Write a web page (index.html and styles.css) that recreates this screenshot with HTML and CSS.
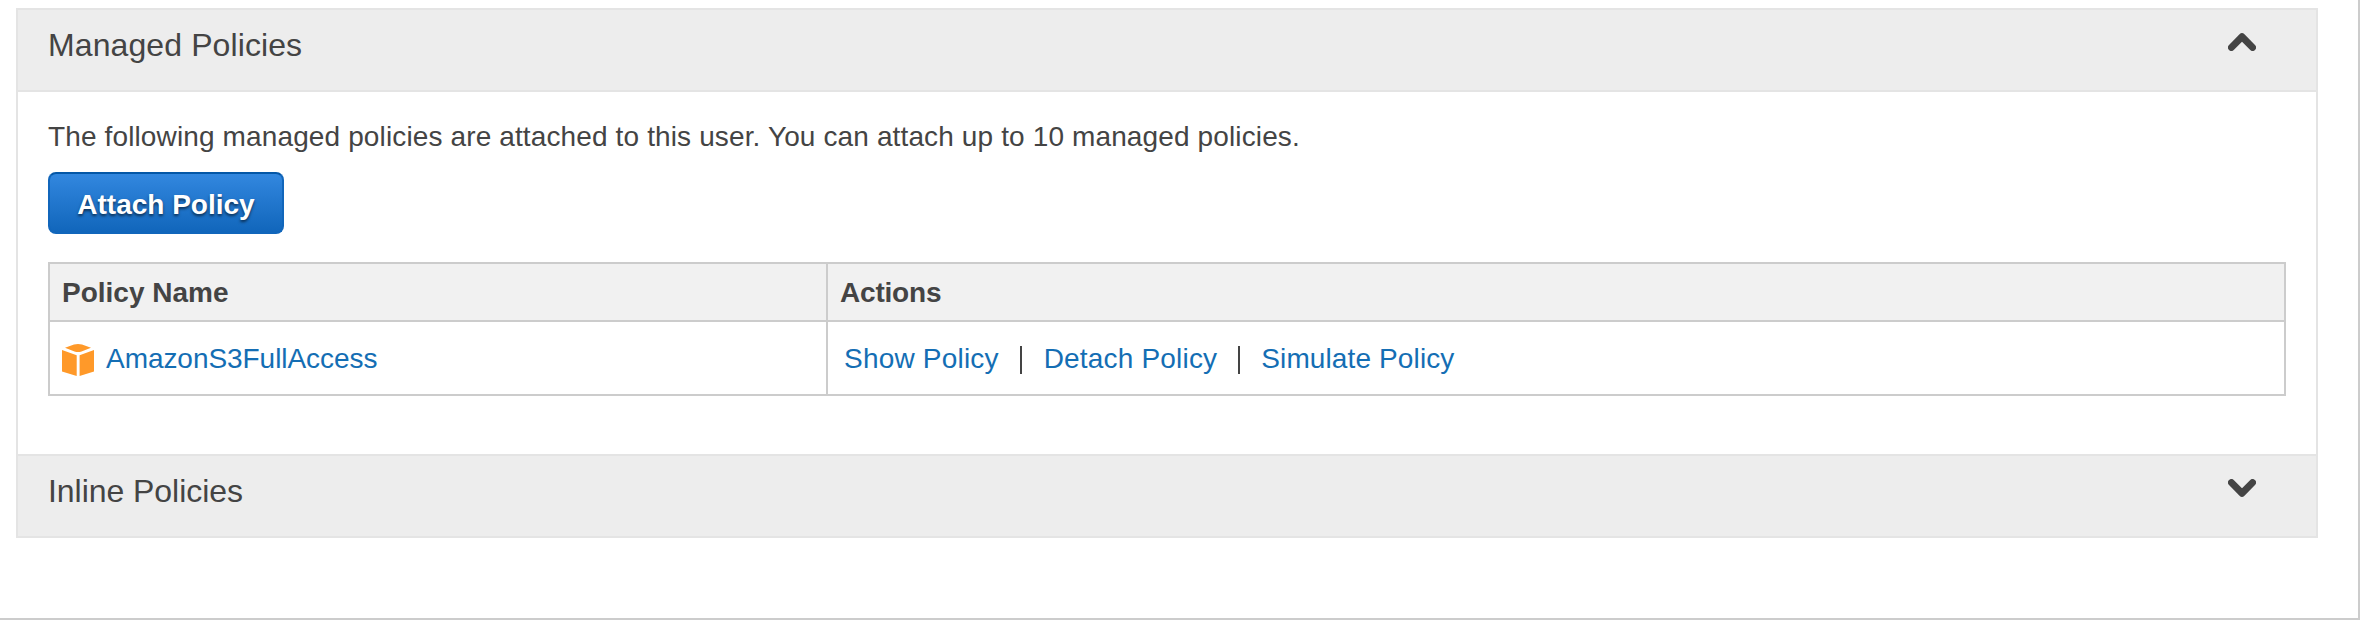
FILE: index.html
```html
<!DOCTYPE html>
<html lang="en">
<head>
<meta charset="utf-8">
<title>Managed Policies</title>
<link rel="stylesheet" href="styles.css">
</head>
<body>
<main class="page">
  <div class="accordion">
    <header class="section-header">
      <h2 class="section-title">Managed Policies</h2>
      <svg class="chevron" viewBox="0 0 28 18"><path d="M3.5 14.4 14 3.8 24.5 14.4"/></svg>
    </header>
    <section class="section-body">
      <p class="intro">The following managed policies are attached to this user. You can attach up to 10 managed policies.</p>
      <button class="attach" type="button">Attach Policy</button>
      <div class="table">
        <div class="cell head">Policy Name</div>
        <div class="cell head actions-head">Actions</div>
        <div class="cell name">
          <svg class="cube" viewBox="0 0 32 32"><path d="M12 .6Q16-.5 20 .6L29 3.8 19.5 7.4Q16 8.5 12.5 7.4L3 3.8ZM0 6 14.7 11.3V32L0 27.6ZM32 6 17.6 11.3V32L32 27.6Z"/></svg>
          <a class="link policy">AmazonS3FullAccess</a>
        </div>
        <div class="cell actions">
          <a class="link show">Show Policy</a>
          <span class="divider"></span>
          <a class="link detach">Detach Policy</a>
          <span class="divider"></span>
          <a class="link simulate">Simulate Policy</a>
        </div>
      </div>
    </section>
    <header class="section-header collapsed">
      <h2 class="section-title inline-title">Inline Policies</h2>
      <svg class="chevron" viewBox="0 0 28 18"><path d="M3.5 3.6 14 14.2 24.5 3.6"/></svg>
    </header>
  </div>
</main>
</body>
</html>
```
FILE: styles.css
```css
* { box-sizing: border-box; }
body {
  margin: 0;
  background: #fff;
  color: #444;
  font: 28px/32px "Liberation Sans", Arial, sans-serif;
}
.page {
  width: 2360px;
  height: 620px;
  padding: 8px 40px 0 16px;
  border: solid #ccc;
  border-width: 0 2px 2px 0;
}
.accordion { border: 2px solid #e4e4e4; }
.section-header {
  display: flex;
  justify-content: space-between;
  align-items: flex-start;
  height: 82px;
  padding: 17px 60px 0 30px;
  background: #ededed;
  border-bottom: 2px solid #e4e4e4;
}
.section-header.collapsed {
  border-top: 2px solid #e4e4e4;
  border-bottom: 0;
}
.section-title {
  margin: 0;
  font-size: 32px;
  line-height: 36px;
  font-weight: 400;
  letter-spacing: .1px;
}
.inline-title { letter-spacing: -.05px; }
.chevron {
  width: 28px;
  height: 18px;
  margin-top: 6px;
  fill: none;
  stroke: #444;
  stroke-width: 7;
  stroke-linecap: round;
  stroke-linejoin: round;
}
.section-body { padding: 29px 30px 58px; }
.intro { margin: 0 0 19px; letter-spacing: .13px; }
.attach {
  display: block;
  width: 236px;
  height: 62px;
  margin: 0 0 28px;
  padding: 3px 0 0;
  border: 2px solid #1166bb;
  border-top-color: #0457a7;
  border-radius: 8px;
  background: linear-gradient(#3287df, #1166bb);
  color: #fff;
  font: bold 28px/32px "Liberation Sans", Arial, sans-serif;
  text-shadow: 0 2px 3px rgba(0, 0, 0, .6);
}
.table {
  display: grid;
  grid-template-columns: 778px 1fr;
  grid-template-rows: 58px 72px;
  border: 2px solid #ccc;
}
.cell { display: flex; align-items: center; padding: 2px 12px 0; white-space: nowrap; }
.head { background: #f1f1f1; border-bottom: 2px solid #ccc; font-weight: 700; }
.actions-head { letter-spacing: -.2px; }
.cell:nth-child(odd) { border-right: 2px solid #ccc; }
.link { color: #146eb4; }
.policy { letter-spacing: -.05px; }
.cube { width: 32px; height: 32px; margin: 2px 12px 0 0; fill: #ff9929; }
.actions { padding-left: 16px; gap: 21px; }
.show { letter-spacing: .2px; }
.detach { margin-left: 1px; letter-spacing: .18px; }
.simulate { letter-spacing: .12px; }
.divider { width: 2px; height: 28px; background: #444; margin-top: 2px; }
```
